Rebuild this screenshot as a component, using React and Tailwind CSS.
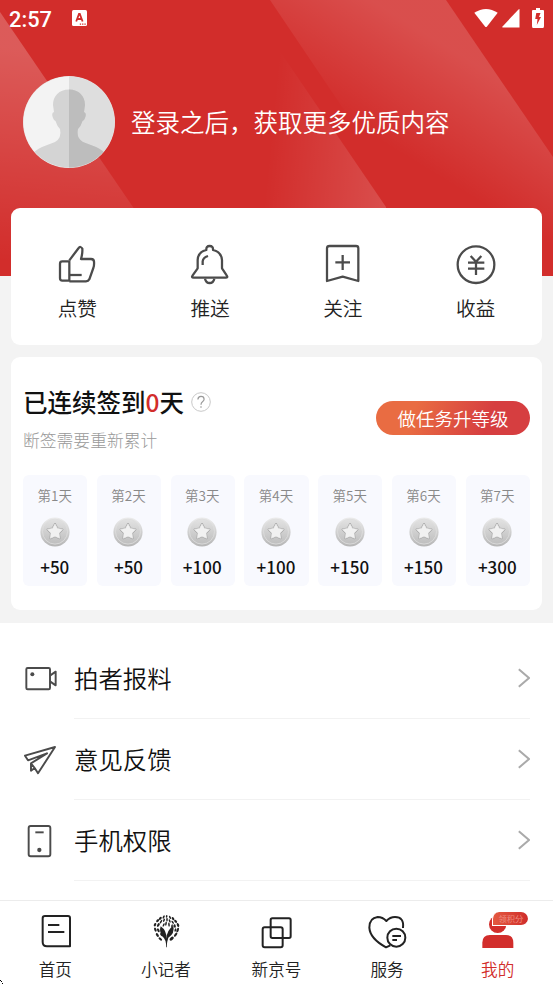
const cjk = "font-['Noto_Sans_CJK_SC','Noto_Sans',sans-serif]"

const HeaderBackground = () => (
  <svg className="absolute left-0 top-0" width="553" height="276" viewBox="0 0 553 276">
    <defs>
      <linearGradient id="bandLeft" gradientUnits="userSpaceOnUse" x1="30" y1="50" x2="8" y2="262">
        <stop offset="0" stopColor="#fff" stopOpacity="0.22" />
        <stop offset="1" stopColor="#fff" stopOpacity="0" />
      </linearGradient>
      <linearGradient id="bandMiddle" gradientUnits="userSpaceOnUse" x1="264" y1="200" x2="386" y2="212">
        <stop offset="0" stopColor="#fff" stopOpacity="0" />
        <stop offset="1" stopColor="#fff" stopOpacity="0.16" />
      </linearGradient>
      <linearGradient id="bandRight" gradientUnits="userSpaceOnUse" x1="448" y1="48" x2="388" y2="146">
        <stop offset="0" stopColor="#fff" stopOpacity="0.16" />
        <stop offset="1" stopColor="#fff" stopOpacity="0" />
      </linearGradient>
    </defs>
    <rect width="553" height="276" fill="#d22d2b" />
    <path d="M0 12 L180 276 H0Z" fill="url(#bandLeft)" />
    <path d="M262 25 L386 207 V276 H262Z" fill="url(#bandMiddle)" />
    <path d="M270 0 H446 L553 157 V276 H456Z" fill="url(#bandRight)" />
  </svg>
)

const StatusBar = () => (
  <div className="flex h-9 items-center pl-[9px] pr-[9px] text-white">
    <span className="w-[63px] pt-[3px] font-['Roboto',sans-serif] text-[21.8px] font-medium leading-none">2:57</span>
    <svg width="15" height="16" viewBox="0 0 15 16">
      <rect width="15" height="16" rx="1.5" fill="#fff" />
      <path d="M4.2 11.5 L7 4 H7.8 L10.6 11.5 M5.4 9 H9.4" fill="none" stroke="#d22d2b" strokeWidth="1.8" />
      <path d="M7.8 14.2h1.3M10.1 14.2h1.3M12.4 14.2h1.3" stroke="#d22d2b" strokeWidth="1.2" />
    </svg>
    <div className="ml-auto flex">
      <svg width="24" height="20" viewBox="0 0 24 20" fill="#fff">
        <path d="M.3 4.8 Q12 -2.8 23.7 4.8 L13 18.4 Q12 19.4 11 18.4Z" />
      </svg>
      <svg className="ml-1" width="18" height="20" viewBox="0 0 18 20" fill="#fff">
        <path d="M17.5 1 V19.5 H.8 Q-.3 19.3 .5 18.4 L16.5 1.4Z" />
      </svg>
      <svg className="ml-[11.500px] mr-[0.5px]" width="12" height="20" viewBox="0 0 12 20">
        <path d="M4 0h4v2h3q1 0 1 1v15q0 2-1 2H1q-1 0-1-2V3q0-1 1-1h3z" fill="#fff" />
        <path d="M4.3 5h4.2L7 9h2L4.8 17 5.500 11H3.200z" fill="#d22d2b" />
      </svg>
    </div>
  </div>
)

const Avatar = () => (
  <svg width="92" height="92" viewBox="0 0 92 92">
    <defs>
      <clipPath id="avatarClip">
        <circle cx="46" cy="46" r="45.5" />
      </clipPath>
      <clipPath id="avatarRight">
        <rect x="46" width="46" height="92" />
      </clipPath>
      <path
        id="person"
        d="M46 13.5 C56 13.5 62 20 62 29 L61 36 Q64 37 62 42 Q61 45 59.5 45 Q58 50 55 53 Q53 62 60 66 L73 71 Q80 74 84 80 V92 H8 V80 Q12 74 19 71 L32 66 Q39 62 37 53 Q34 50 32.5 45 Q31 45 30 42 Q28 37 31 36 L30 29 C30 20 36 13.5 46 13.5Z"
      />
    </defs>
    <circle cx="46" cy="46" r="46" fill="#e9e1e1" />
    <g clipPath="url(#avatarClip)">
      <rect width="46" height="92" fill="#f3f3f3" />
      <rect x="46" width="46" height="92" fill="#dedede" />
      <use href="#person" fill="#d4d4d4" />
      <use href="#person" fill="#bdbdbd" clipPath="url(#avatarRight)" />
    </g>
  </svg>
)

const quickLinks = [
  {
    label: "点赞",
    box: "171 129 120 126",
    icon: (
      <>
        <path d="M187 184 H208 V242 H187 Q180 242 180 235 V191 Q180 184 187 184Z" />
        <path d="M208 181 L236 144 Q241 137 247 146 Q248 160 243 177 H273 Q282 177 282 185 Q283 196 280 204 L268 238 Q265 244 258 244 H208" />
        <path d="M210 225 H245" />
      </>
    ),
  },
  {
    label: "推送",
    box: "570 129 120 126",
    icon: (
      <>
        <path d="M619 150 Q618 138 629 138 Q640 138 639 150 Q664 156 666 180 V205 L680 226 Q685 233 677 233 H581 Q573 233 578 226 L593 205 V180 Q594 156 619 150Z" />
        <path d="M608 195 V184 Q609 173 624 168" />
        <path d="M615 236 Q618 249 629 249 Q640 249 643 236" />
      </>
    ),
  },
  {
    label: "关注",
    box: "140 129 120 126",
    icon: <path d="M160 138 H239 Q246 138 246 145 V243 L199 230 L152 243 V145 Q152 138 160 138Z M177 187 H221 M199 165 V210" />,
  },
  {
    label: "收益",
    box: "539 129 120 126",
    icon: (
      <>
        <circle cx="599" cy="194" r="55" />
        <path d="M583 168 L599 185 L615 168 M575 188 H624 M575 206 H624 M599 185 V225" />
      </>
    ),
  },
]

const QuickLinks = () => (
  <div className="grid h-[137.500px] grid-cols-4 rounded-[9px] bg-white pt-[35.500px]">
    {quickLinks.map((item) => (
      <div key={item.label} className="flex flex-col items-center">
        <svg width="40" height="42" viewBox={item.box} fill="none" stroke="#4b4b4b" strokeWidth="6.8" strokeLinejoin="round">
          {item.icon}
        </svg>
        <span className="mt-[9px] text-[19.7px] font-[350] leading-[28px] text-[#222]">{item.label}</span>
      </div>
    ))}
  </div>
)

const starPath =
  "M15 7 L17.4 11.400 L22.500 12.400 L19 16.100 L19.600 21.300 L15 19.200 L10.400 21.300 L11 16.100 L7.500 12.400 L12.600 11.400Z"

const Coin = () => (
  <svg width="30" height="30" viewBox="0 0 30 30">
    <defs>
      <linearGradient id="coinEdge" x1="0" y1="0" x2="0" y2="1">
        <stop offset="0" stopColor="#ececec" />
        <stop offset="1" stopColor="#b5b5b5" />
      </linearGradient>
      <linearGradient id="coinFace" x1="0" y1="0" x2="0" y2="1">
        <stop offset="0" stopColor="#e2e2e2" />
        <stop offset="1" stopColor="#bebebe" />
      </linearGradient>
    </defs>
    <circle cx="15" cy="15" r="14.6" fill="url(#coinEdge)" />
    <circle cx="15" cy="14.6" r="12.5" fill="url(#coinFace)" stroke="#dedede" strokeWidth="0.8" />
    <g strokeLinejoin="round" fill="#f1f1f1">
      <path d={starPath} stroke="#a8a8a8" strokeWidth="2" />
      <path d={starPath} stroke="#f1f1f1" strokeWidth="0.6" />
    </g>
  </svg>
)

const days = [50, 50, 100, 100, 150, 150, 300]

const CheckIn = () => (
  <div className="mt-3 h-[253px] rounded-[9px] bg-white px-3 pt-[27px]">
    <div className="flex h-[91px] justify-between">
      <div>
        <div className="flex items-center">
          <h2 className="whitespace-nowrap text-[24.5px] font-medium leading-9 text-[#111]">
            已连续签到<span className="text-[#d22d2b]">0</span>天
          </h2>
          <svg className="ml-[7px]" width="20" height="20" viewBox="0 0 20 20" fill="none">
            <circle cx="10" cy="10" r="9.3" stroke="#c8c8c8" />
            <path d="M6.9 7.5 Q7 4.4 10 4.4 Q13.1 4.4 13.1 7.2 Q13.1 8.6 11.5 9.7 Q10 10.7 10 12.7 M10 14.2 V15.7" stroke="#999" strokeWidth="1.2" />
          </svg>
        </div>
        <p className="mt-[8px] text-[16.8px] font-light leading-6 text-[#999]">断签需要重新累计</p>
      </div>
      <button className="mt-[17px] h-[34px] w-[154px] rounded-full bg-linear-[110deg,#e96c42_25%,#d63e40_72%] text-[18.5px] font-[350] leading-[34px] text-white">
        做任务升等级
      </button>
    </div>
    <div className="grid grid-cols-7 gap-[9.3px]">
      {days.map((points, i) => (
        <div key={i} className="flex h-[111px] flex-col items-center rounded-[6px] bg-[#f8f9fe] pt-[10px]">
          <span className="mr-px text-[13.5px] font-[350] leading-5 text-[#888]">第{i + 1}天</span>
          <div className="mr-px mt-[12px]">
            <Coin />
          </div>
          <span className="mr-px mt-[8px] text-[17px] font-medium leading-6 text-[#111]">+{points}</span>
        </div>
      ))}
    </div>
  </div>
)

const menuItems = [
  {
    label: "拍者报料",
    box: "70 62 105 105",
    icon: (
      <>
        <rect x="80" y="83" width="71" height="64" rx="4" />
        <path d="M152 105 L168 94 V135 L152 124" />
        <circle cx="98" cy="102" r="6" fill="#4b4b4b" stroke="none" />
      </>
    ),
  },
  {
    label: "意见反馈",
    box: "70 305 105 105",
    icon: <path d="M76 346 L166 320 L115 399 L105 383 L94 391 V369 L142 339 L85 360Z M105 383 L94 369" />,
  },
  {
    label: "手机权限",
    box: "70 548 105 105",
    icon: (
      <>
        <rect x="87" y="557" width="65" height="91" rx="6" />
        <path d="M107 576 H132" />
        <circle cx="119" cy="629" r="6.5" fill="#4b4b4b" stroke="none" />
      </>
    ),
  },
]

const Menu = () => (
  <div className="mt-[13px] h-[277px] bg-white pl-[23px] pr-[23px] pt-[15px]">
    {menuItems.map((item) => (
      <div key={item.label} className="flex h-[81px] items-center">
        <svg width="35" height="35" viewBox={item.box} fill="none" stroke="#4b4b4b" strokeWidth="5.8" strokeLinejoin="round">
          {item.icon}
        </svg>
        <div className="ml-4 flex h-full flex-1 items-center justify-between border-b border-[#f2f2f2] text-[24.4px] font-[350] text-[#111]">
          <span>{item.label}</span>
          <svg width="12" height="20" viewBox="0 0 12 20" fill="none" stroke="#aaa" strokeWidth="2">
            <path d="M.8 1.2 L11 10 L.8 18.8" />
          </svg>
        </div>
      </div>
    ))}
  </div>
)

// x, y, rx, ry, rotation of each leaf in the crown
const leaves = [
  [464, 87, 3, 5, 25], [465, 102, 3, 6, -20], [471, 118, 3, 6, -35], [480, 130, 3, 6, -50],
  [472, 75, 3, 5, 45], [480, 68, 3, 5, 40], [490, 64, 2, 5, 30], [499, 62, 2, 4, 10],
  [509, 65, 2, 5, -25], [518, 69, 3, 5, -35], [526, 77, 3, 5, -45], [533, 88, 3, 6, -20],
  [532, 103, 3, 7, 20], [526, 117, 3, 7, 35], [514, 129, 4, 7, 50], [474, 88, 3, 6, 30],
  [482, 78, 2, 6, 30], [491, 74, 2, 5, 20], [500, 72, 2, 5, 0], [508, 76, 2, 5, -20],
  [517, 80, 2, 5, -35], [523, 91, 3, 5, -15], [474, 104, 3, 6, -25], [497, 84, 2, 6, 10],
  [506, 87, 2, 6, -5], [490, 88, 2, 5, 25], [515, 91, 2, 5, 10], [525, 103, 2, 5, 15], [483, 117, 2, 5, -40],
]

const tabs = [
  {
    label: "首页",
    box: "109 51 120 120",
    icon: <path d="M136 63 H205 Q211 63 211 69 V154 H142 Q129 154 129 141 V70 Q129 63 136 63Z M145 90 H179 M145 111 H194" />,
  },
  {
    label: "小记者",
    box: "440 49 120 120",
    icon: (
      <g fill="#222" stroke="none">
        {leaves.map(([x, y, rx, ry, r], i) => (
          <ellipse key={i} cx={x} cy={y} rx={rx + 0.4} ry={ry + 0.4} transform={`rotate(${r} ${x} ${y})`} />
        ))}
        <path d="M497 155 Q499 132 485 121 Q476 107 481 92 Q500 105 498 129 Q500 102 519 90 Q524 113 504 126 Q500 136 499 155Z" />
      </g>
    ),
  },
  {
    label: "新京号",
    box: "771 50 120 120",
    icon: (
      <>
        <rect x="788" y="96" width="60" height="60" rx="6" />
        <rect x="812" y="69" width="60" height="59" rx="5" />
      </>
    ),
  },
  {
    label: "服务",
    box: "275 50 120 120",
    icon: (
      <>
        <path d="M380 98 Q384 65 356 65 Q341 65 330 77 Q319 65 304 65 Q279 68 279 97 Q281 130 329 156 L342 150" />
        <circle cx="360" cy="127" r="27" />
        <path d="M348 122 H374 M348 134 H362" />
      </>
    ),
  },
  {
    label: "我的",
    active: true,
    box: "608 51 120 120",
    icon: (
      <g fill="#d22d2b" stroke="none">
        <circle cx="664" cy="88" r="26" />
        <path d="M618 159 V143 Q618 120 641 120 H689 Q711 120 711 143 V159Z" />
      </g>
    ),
  },
]

const TabBar = () => (
  <div className="relative grid h-[84px] grid-cols-5 border-t border-[#ececec] bg-white pt-[11px]">
    {tabs.map((tab) => (
      <div key={tab.label} className="relative flex flex-col items-center">
        <svg className="ml-[2px]" width="40" height="40" viewBox={tab.box} fill="none" stroke="#222" strokeWidth="6" strokeLinejoin="round">
          {tab.icon}
        </svg>
        <span className={`mt-[5px] text-[16.6px] font-[350] leading-6 ${tab.active ? "text-[#d22d2b]" : "text-[#222]"}`}>
          {tab.label}
        </span>
        {tab.active && (
          <span className="absolute left-[50px] top-0 h-[14px] w-[36px] rounded-[7px] rounded-bl-none border-b border-l border-white bg-linear-to-r from-[#e45840] to-[#cf2c2b] text-center text-[8.3px] leading-[13px] text-[#ef8d80]">
            领积分
          </span>
        )}
      </div>
    ))}
    <svg className="absolute bottom-0 left-0" width="4" height="4" viewBox="0 0 4 4" shapeRendering="crispEdges">
      <path d="M0 0h1v1H0z M1 1h1v1H1z M2 3h1v1H2z" fill="#000" />
    </svg>
  </div>
)

export default function App() {
  return (
    <div className={`relative h-[984px] w-[553px] overflow-hidden bg-[#f3f3f3] ${cjk}`}>
      <HeaderBackground />
      <div className="relative">
        <StatusBar />
        <div className="flex h-[171.500px] items-center gap-4 pl-[23px] pt-px">
          <Avatar />
          <span className="text-[24.5px] font-[350] text-white">登录之后，获取更多优质内容</span>
        </div>
        <div className="mx-[11px]">
          <QuickLinks />
          <CheckIn />
        </div>
        <Menu />
        <TabBar />
      </div>
    </div>
  )
}
